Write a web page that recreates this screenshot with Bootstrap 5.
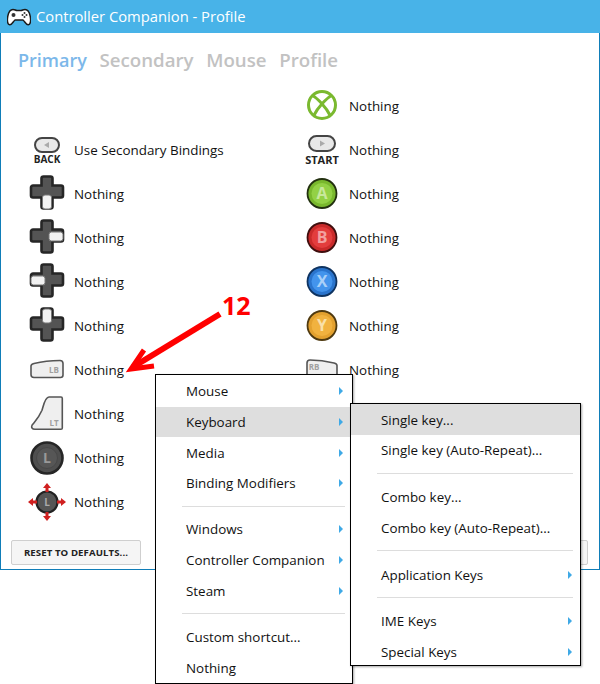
<!DOCTYPE html>
<html lang="en"><head><meta charset="utf-8"><title>Controller Companion - Profile</title>
<link href="https://cdn.jsdelivr.net/npm/bootstrap@5.3.0/dist/css/bootstrap.min.css" rel="stylesheet">
<style>
html,body{margin:0;background:#fff;}
body{width:600px;height:684px;overflow:hidden;position:relative;font-family:"Open Sans","Noto Sans",sans-serif;font-size:13.4px;color:#111;}
.cc-window{width:600px;height:570px;border:1px solid #0f7db8;border-top:0;background:#fff;}
.cc-title{height:33px;margin:0 -1px;background:#48b3e8;color:#fff;font-size:14.75px;padding-left:7px;gap:5px;}
.cc-tabs{padding:15px 0 0 17px;gap:12.6px;height:51px;font-size:18.7px;font-weight:600;line-height:24px;color:#c2c2c2;}
.cc-tabs .cc-on{color:#7cb8ea;font-size:18px;}
.cc-cols{padding-left:26px;}
.cc-col{width:275px;}
.cc-row{height:44px;gap:7px;}
.cc-ico{width:40px;height:40px;flex:none;display:block;}
.cc-foot{padding:16px 11px 0 10px;}
.cc-btn{height:25px;width:130px;padding:0;font-size:9.6px;font-weight:700;line-height:23px;color:#222;background:#f5f5f5;border:1px solid #cfcfcf;border-radius:2px;letter-spacing:.1px;}
.cc-menu{position:absolute;background:#fff;border:1px solid #000;box-shadow:1px 1px 2px rgba(0,0,0,.35);}
.cc-m1{left:155px;top:374px;width:198px;height:310px;padding-top:1px;}
.cc-m2{left:350px;top:403px;width:231px;height:263px;}
.cc-item{height:30.7px;padding:0 9px 0 30px;white-space:nowrap;}
.cc-m2 .cc-item{padding:1px 8px 0 30px;}
.cc-item.cc-hot{background:#dedede;}
.cc-tri{width:0;height:0;border-left:4px solid #3fa9e6;border-top:4px solid transparent;border-bottom:4px solid transparent;}
.cc-sep{height:1px;background:#ddd;margin:7.5px 7px 7.5px 26px;}
.cc-m1 .cc-sep{margin:7.2px 7px 7.2px 26px;}
.cc-note{position:absolute;left:120px;top:290px;width:140px;height:90px;overflow:visible;}
.cc-num{position:absolute;left:222px;top:288px;font-size:25px;font-weight:700;line-height:34px;color:#f00;}
svg text{font-family:"Open Sans","Noto Sans",sans-serif;font-weight:700;text-anchor:middle;}
</style></head>
<body>
<svg width="0" height="0" class="position-absolute">
<defs>
<symbol id="dpad" viewBox="0 0 40 40">
<path d="M14.500 4.500a2 2 0 0 1 2-2h7a2 2 0 0 1 2 2v7h8.500a2 2 0 0 1 2 2v8a2 2 0 0 1-2 2h-8.500v9a2 2 0 0 1-2 2h-7a2 2 0 0 1-2-2v-9H6a2 2 0 0 1-2-2v-8a2 2 0 0 1 2-2h8.500z" fill="#545454" stroke="#262626" stroke-width="2.600"/>
</symbol>
</defs>
</svg>
<div class="cc-window">
<div class="cc-title d-flex align-items-center">
<svg width="24" height="18" viewBox="0 0 24 18"><path d="M6 1.500c2 0 2.500 1 4 1h4c1.500 0 2-1 4-1 3 0 4.500 3 5.300 7 .6 3.500.5 8-2 8.300-2.300.2-3.300-3.300-5.300-4.800H8c-2 1.500-3 5-5.300 4.800-2.500-.3-2.600-4.800-2-8.300C1.500 4.500 3 1.500 6 1.500z" fill="#fff" stroke="#1a1a1a" stroke-width="1.500"/><circle cx="6.500" cy="7" r="2" fill="#333"/><circle cx="17.500" cy="5" r="1" fill="#333"/><circle cx="15.500" cy="7" r="1" fill="#333"/><circle cx="19.500" cy="7" r="1" fill="#333"/><circle cx="17.500" cy="9" r="1" fill="#333"/></svg>
<span>Controller Companion - Profile</span>
</div>
<div class="cc-tabs d-flex"><span class="cc-on">Primary</span><span>Secondary</span><span>Mouse</span><span>Profile</span></div>
<div class="cc-cols d-flex">
<div class="cc-col">
<div class="cc-row"></div>
<div class="cc-row d-flex align-items-center">
<svg class="cc-ico" viewBox="0 0 40 40"><rect x="8" y="8" width="24" height="14" rx="7" fill="#e8e8e8" stroke="#444" stroke-width="2"/><path d="M17 15l5-3v6z" fill="#aaa"/><text x="20" y="32.500" font-size="10" fill="#222">BACK</text></svg>
<span>Use Secondary Bindings</span></div>
<div class="cc-row d-flex align-items-center">
<svg class="cc-ico" viewBox="0 0 40 40"><use href="#dpad"/><rect x="15.500" y="21" width="9" height="14" rx="2.500" fill="#f2f2f2" stroke="#777"/></svg>
<span>Nothing</span></div>
<div class="cc-row d-flex align-items-center">
<svg class="cc-ico" viewBox="0 0 40 40"><use href="#dpad"/><rect x="22" y="14" width="14" height="9" rx="2.500" fill="#f2f2f2" stroke="#777"/></svg>
<span>Nothing</span></div>
<div class="cc-row d-flex align-items-center">
<svg class="cc-ico" viewBox="0 0 40 40"><use href="#dpad"/><rect x="4" y="14" width="14" height="9" rx="2.500" fill="#f2f2f2" stroke="#777"/></svg>
<span>Nothing</span></div>
<div class="cc-row d-flex align-items-center">
<svg class="cc-ico" viewBox="0 0 40 40"><use href="#dpad"/><rect x="15.500" y="3" width="9" height="14" rx="2.500" fill="#f2f2f2" stroke="#777"/></svg>
<span>Nothing</span></div>
<div class="cc-row d-flex align-items-center">
<svg class="cc-ico" viewBox="0 0 40 40"><path d="M4 16c0-1 1-2 3-2.500 8-2 17-3 26-3 2 0 3 1 3 3V25c0 1.500-1 2.500-2.500 2.500H7c-2 0-3-1-3-3z" fill="#efefef" stroke="#555" stroke-width="1.600"/><text x="27" y="23" font-size="8" fill="#a0a0a0">LB</text></svg>
<span>Nothing</span></div>
<div class="cc-row d-flex align-items-center">
<svg class="cc-ico" viewBox="0 0 40 40"><path d="M22 3h12c.8 0 1.300.6 1.300 1.500V34c0 .8-.5 1.300-1.300 1.300H8c-3 0-4-2-3-4 4-5 7-8 10-15 1.500-5 3-13.300 7-13.300z" fill="#efefef" stroke="#555" stroke-width="1.600"/><text x="27" y="32" font-size="8" fill="#a0a0a0">LT</text></svg>
<span>Nothing</span></div>
<div class="cc-row d-flex align-items-center">
<svg class="cc-ico" viewBox="0 0 40 40"><circle cx="20" cy="20" r="15.500" fill="#4f4f4f" stroke="#262626" stroke-width="2.600"/><circle cx="20" cy="20" r="10.500" fill="#565656" stroke="#484848"/><text x="20" y="25" font-size="14" fill="#999">L</text></svg>
<span>Nothing</span></div>
<div class="cc-row d-flex align-items-center">
<svg class="cc-ico" viewBox="0 0 40 40"><circle cx="20" cy="20" r="10.500" fill="#555" stroke="#222" stroke-width="2.200"/><text x="20" y="24" font-size="10" fill="#aaa">L</text><path d="M20 1l4 5h-2.500v4h-3V6H16zM20 39l4-5h-2.500v-4h-3v4H16zM1 20l5-4v2.500h4v3H6V24zM39 20l-5-4v2.500h-4v3h4V24z" fill="#d02020"/></svg>
<span>Nothing</span></div>
</div>
<div class="cc-col">
<div class="cc-row d-flex align-items-center">
<svg class="cc-ico" viewBox="0 0 40 40"><circle cx="20" cy="19" r="13.500" fill="#fff" stroke="#7ab92f" stroke-width="3"/><path d="M10.500 9.500C15 12 24 21 28.500 30M29.500 9.500C25 12 16 21 11.500 30" fill="none" stroke="#7ab92f" stroke-width="3"/></svg>
<span>Nothing</span></div>
<div class="cc-row d-flex align-items-center">
<svg class="cc-ico" viewBox="0 0 40 40"><rect x="7" y="6" width="26" height="15" rx="7.500" fill="#e8e8e8" stroke="#444" stroke-width="2"/><path d="M23 13.500l-5-3v6z" fill="#aaa"/><text x="20" y="33.500" font-size="11" fill="#222">START</text></svg>
<span>Nothing</span></div>
<div class="cc-row d-flex align-items-center">
<svg class="cc-ico" viewBox="0 0 40 40"><circle cx="20" cy="19.500" r="14.500" fill="#79b82d" stroke="#22300f" stroke-width="1.800"/><circle cx="20" cy="19.500" r="10.500" fill="#93d145"/><text x="20" y="25" font-size="16" fill="#c8e89c">A</text></svg>
<span>Nothing</span></div>
<div class="cc-row d-flex align-items-center">
<svg class="cc-ico" viewBox="0 0 40 40"><circle cx="20" cy="19.500" r="14.500" fill="#c92a2a" stroke="#3f0e0e" stroke-width="1.800"/><circle cx="20" cy="19.500" r="10.500" fill="#e33d3d"/><text x="20" y="25" font-size="16" fill="#f2a0a0">B</text></svg>
<span>Nothing</span></div>
<div class="cc-row d-flex align-items-center">
<svg class="cc-ico" viewBox="0 0 40 40"><circle cx="20" cy="19.500" r="14.500" fill="#2a74cc" stroke="#0f3360" stroke-width="1.800"/><circle cx="20" cy="19.500" r="10.500" fill="#4394ec"/><text x="20" y="25" font-size="16" fill="#a9d0f8">X</text></svg>
<span>Nothing</span></div>
<div class="cc-row d-flex align-items-center">
<svg class="cc-ico" viewBox="0 0 40 40"><circle cx="20" cy="19.500" r="14.500" fill="#e3a12f" stroke="#4f3a10" stroke-width="1.800"/><circle cx="20" cy="19.500" r="10.500" fill="#f1b23f"/><text x="20" y="25" font-size="16" fill="#f9e0a8">Y</text></svg>
<span>Nothing</span></div>
<div class="cc-row d-flex align-items-center">
<svg class="cc-ico" viewBox="0 0 40 40"><path d="M5 13c0-2 1-3 3-3 8 0 16 1 24 3 2 .5 3 1.500 3 2.500V26c0 1.500-1 2.500-2.500 2.500h-25C6 28.500 5 27.500 5 26z" fill="#efefef" stroke="#555" stroke-width="1.600"/><text x="12" y="20" font-size="8" fill="#a0a0a0">RB</text></svg>
<span>Nothing</span></div>
</div>
</div>
<div class="cc-foot d-flex justify-content-between">
<button type="button" class="cc-btn">RESET TO DEFAULTS...</button>
<button type="button" class="cc-btn" aria-label="More"></button>
</div>
</div>
<svg class="cc-note" viewBox="0 0 140 90"><path d="M100 24L13 77" fill="none" stroke="#f00" stroke-width="6"/><path d="M24 60L11 79L34 76" fill="none" stroke="#f00" stroke-width="5"/></svg>
<div class="cc-num">12</div>
<div class="cc-menu cc-m1">
<div class="cc-item d-flex align-items-center justify-content-between"><span>Mouse</span><i class="cc-tri"></i></div>
<div class="cc-item cc-hot d-flex align-items-center justify-content-between"><span>Keyboard</span><i class="cc-tri"></i></div>
<div class="cc-item d-flex align-items-center justify-content-between"><span>Media</span><i class="cc-tri"></i></div>
<div class="cc-item d-flex align-items-center justify-content-between"><span>Binding Modifiers</span><i class="cc-tri"></i></div>
<div class="cc-sep"></div>
<div class="cc-item d-flex align-items-center justify-content-between"><span>Windows</span><i class="cc-tri"></i></div>
<div class="cc-item d-flex align-items-center justify-content-between"><span>Controller Companion</span><i class="cc-tri"></i></div>
<div class="cc-item d-flex align-items-center justify-content-between"><span>Steam</span><i class="cc-tri"></i></div>
<div class="cc-sep"></div>
<div class="cc-item d-flex align-items-center"><span>Custom shortcut...</span></div>
<div class="cc-item d-flex align-items-center"><span>Nothing</span></div>
</div>
<div class="cc-menu cc-m2">
<div class="cc-item cc-hot d-flex align-items-center"><span>Single key...</span></div>
<div class="cc-item d-flex align-items-center"><span>Single key (Auto-Repeat)...</span></div>
<div class="cc-sep"></div>
<div class="cc-item d-flex align-items-center"><span>Combo key...</span></div>
<div class="cc-item d-flex align-items-center"><span>Combo key (Auto-Repeat)...</span></div>
<div class="cc-sep"></div>
<div class="cc-item d-flex align-items-center justify-content-between"><span>Application Keys</span><i class="cc-tri"></i></div>
<div class="cc-sep"></div>
<div class="cc-item d-flex align-items-center justify-content-between"><span>IME Keys</span><i class="cc-tri"></i></div>
<div class="cc-item d-flex align-items-center justify-content-between"><span>Special Keys</span><i class="cc-tri"></i></div>
</div>
</body></html>
